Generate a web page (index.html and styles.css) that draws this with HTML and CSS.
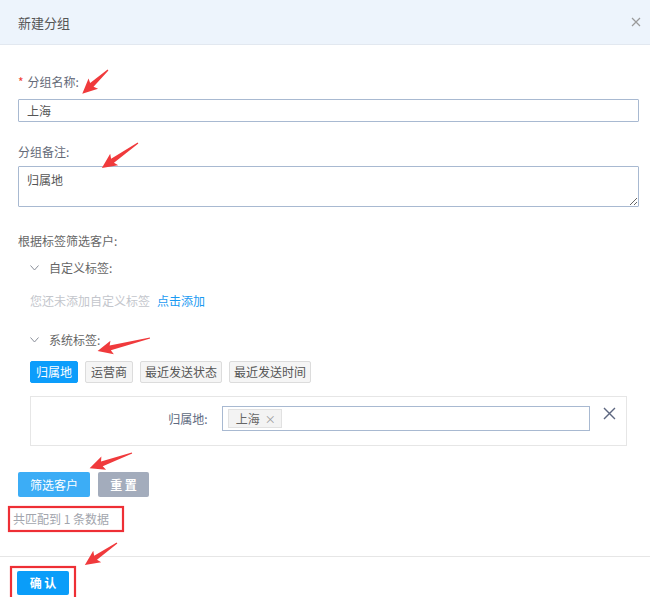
FILE: index.html
```html
<!DOCTYPE html>
<html lang="zh-CN">
<head>
<meta charset="utf-8">
<title>新建分组</title>
<link rel="stylesheet" href="styles.css">
</head>
<body>
<div class="page">
  <div class="dlg-header">
    <span class="dlg-title">新建分组</span>
    <svg class="dlg-close" width="10" height="10" viewBox="0 0 10 10"><path d="M1 1L9 9M9 1L1 9" stroke="#9a9a9a" stroke-width="1.2" fill="none"/></svg>
  </div>
  <div class="dlg-body">
    <div class="label label-first"><span class="req">*</span>分组名称:</div>
    <input class="text-input" type="text" value="上海">
    <div class="label label-second">分组备注:</div>
    <textarea class="text-area">归属地</textarea>

    <div class="section-label">根据标签筛选客户:</div>
    <div class="group-head group-custom">
      <svg class="chev" width="9" height="6" viewBox="0 0 9 6"><path d="M0.5 0.5L4.5 5L8.5 0.5" stroke="#8a8f99" stroke-width="1" fill="none"/></svg>
      <span>自定义标签:</span>
    </div>
    <div class="empty-row">您还未添加自定义标签<a class="link">点击添加</a></div>

    <div class="group-head group-system">
      <svg class="chev" width="9" height="6" viewBox="0 0 9 6"><path d="M0.5 0.5L4.5 5L8.5 0.5" stroke="#8a8f99" stroke-width="1" fill="none"/></svg>
      <span>系统标签:</span>
    </div>
    <div class="tag-row">
      <span class="tag-btn active">归属地</span>
      <span class="tag-btn">运营商</span>
      <span class="tag-btn tag-long">最近发送状态</span>
      <span class="tag-btn tag-long">最近发送时间</span>
    </div>

    <div class="filter-box">
      <div class="filter-label">归属地:</div>
      <div class="filter-select">
        <span class="chip">上海<span class="chip-x">×</span></span>
      </div>
      <svg class="filter-close" width="13" height="13" viewBox="0 0 13 13"><path d="M1 1L12 12M12 1L1 12" stroke="#5d6780" stroke-width="1.4" fill="none"/></svg>
    </div>

    <div class="btn-row">
      <span class="btn btn-primary">筛选客户</span>
      <span class="btn btn-gray">重 置</span>
    </div>
    <div class="match-count">共匹配到 1 条数据</div>
  </div>
  <div class="dlg-footer">
    <span class="btn btn-confirm">确 认</span>
  </div>

  <svg class="annot" width="650" height="597" viewBox="0 0 650 597">
    <g fill="#f03a3c">
      <polygon transform="translate(108,70) rotate(137.3)" points="0,-0.6 22,-2.5 20,-7 35,0 20,7 22,2.5 0,0.6"/>
      <polygon transform="translate(138,143) rotate(145.2)" points="0,-0.6 31,-2.5 29,-7 44,0 29,7 31,2.5 0,0.6"/>
      <polygon transform="translate(150,338) rotate(166)" points="0,-0.6 41,-2.5 39,-7 54,0 39,7 41,2.5 0,0.6"/>
      <polygon transform="translate(132,453) rotate(160.3)" points="0,-0.6 32,-2.5 30,-7 45,0 30,7 32,2.5 0,0.6"/>
      <polygon transform="translate(117,543) rotate(145.5)" points="0,-0.6 26,-2.5 24,-7 39,0 24,7 26,2.5 0,0.6"/>
    </g>
    <g fill="none" stroke="#ee2f35" stroke-width="2.2">
      <rect x="9" y="507" width="114" height="24"/>
      <rect x="11" y="567" width="64" height="34"/>
    </g>
  </svg>
</div>
</body>
</html>
```

FILE: styles.css
```css
* { box-sizing: border-box; }

body {
  margin: 0;
  background: #fff;
  font-family: "Noto Sans CJK SC", "Noto Sans", sans-serif;
  font-size: 12px;
  color: #5f6675;
}

.page {
  position: relative;
  width: 650px;
  height: 597px;
  overflow: hidden;
}

.dlg-header {
  height: 45px;
  background: #edf4fc;
  border-bottom: 1px solid #e2e8f0;
  display: flex;
  align-items: center;
  justify-content: space-between;
  padding: 0 9px 0 18px;
}

.dlg-title {
  font-size: 13px;
  color: #555;
}

.dlg-body {
  padding: 28px 11px 0 18px;
}

.label {
  line-height: 18px;
  color: #646a78;
}

.label-first { margin-bottom: 8px; }
.label-second { margin-top: 21px; margin-bottom: 5px; }

.req {
  color: #f04134;
  margin-right: 4px;
}

.text-input,
.text-area {
  display: block;
  width: 100%;
  border: 1px solid #a8b9d1;
  border-radius: 1px;
  font-family: inherit;
  font-size: 12px;
  color: #555;
  padding: 0 8px;
  outline: none;
}

.text-input { height: 23px; }

.text-area {
  height: 41px;
  padding: 4px 8px;
  resize: vertical;
  line-height: 18px;
}

.section-label {
  margin-top: 25px;
  line-height: 18px;
  color: #666;
}

.group-head {
  display: flex;
  align-items: center;
  padding-left: 12px;
  line-height: 18px;
  color: #666;
}

.group-custom { margin-top: 9px; }
.group-system { margin-top: 21px; }

.chev { margin-right: 10px; }

.empty-row {
  margin-top: 15px;
  padding-left: 12px;
  line-height: 18px;
  color: #c3c6cc;
}

.link {
  color: #1a9af2;
  margin-left: 7px;
}

.tag-row {
  margin-top: 12px;
  padding-left: 12px;
  display: flex;
  gap: 7px;
}

.tag-btn {
  height: 22px;
  line-height: 20px;
  padding: 0 5px;
  border: 1px solid #dcdcdc;
  background: #f5f5f5;
  color: #555;
  border-radius: 2px;
}

.tag-btn.tag-long { padding: 0 4px; }

.tag-btn.active {
  background: #0c9dfb;
  border-color: #0c9dfb;
  color: #fff;
}

.filter-box {
  margin: 13px 12px 0 12px;
  height: 50px;
  border: 1px solid #e6e6e6;
  display: flex;
  align-items: flex-start;
  padding: 9px 10px 0 0;
}

.filter-label {
  width: 177px;
  text-align: right;
  line-height: 25px;
  color: #5d6a80;
}

.filter-select {
  margin-left: 14px;
  width: 369px;
  height: 25px;
  border: 1px solid #a8b9d1;
  padding: 2px 5px;
  display: flex;
}

.chip {
  height: 19px;
  line-height: 17px;
  border: 1px solid #e1e1e1;
  background: #f3f3f3;
  color: #666;
  padding: 0 5px 0 7px;
}

.chip-x {
  color: #999;
  font-size: 11px;
  margin-left: 5px;
}

.filter-close {
  margin-left: 13px;
  margin-top: 1px;
}

.btn-row {
  margin-top: 26px;
  display: flex;
  gap: 8px;
}

.btn {
  display: inline-block;
  height: 25px;
  line-height: 25px;
  padding: 0 12px;
  color: #fff;
  border-radius: 2px;
  text-align: center;
}

.btn-primary { background: #3cadf6; width: 72px; }
.btn-gray { background: #a3acbc; width: 51px; font-weight: bold; }

.match-count {
  margin-top: 13px;
  line-height: 18px;
  color: #a2a5ad;
  margin-left: -5px;
}

.dlg-footer {
  margin-top: 28px;
  border-top: 1px solid #e6e6e6;
  padding: 14px 0 0 17px;
}

.btn-confirm {
  background: #0a9df9;
  width: 52px;
  height: 24px;
  line-height: 24px;
  font-weight: bold;
  padding: 0;
}

.annot {
  position: absolute;
  left: 0;
  top: 0;
  pointer-events: none;
}
```
